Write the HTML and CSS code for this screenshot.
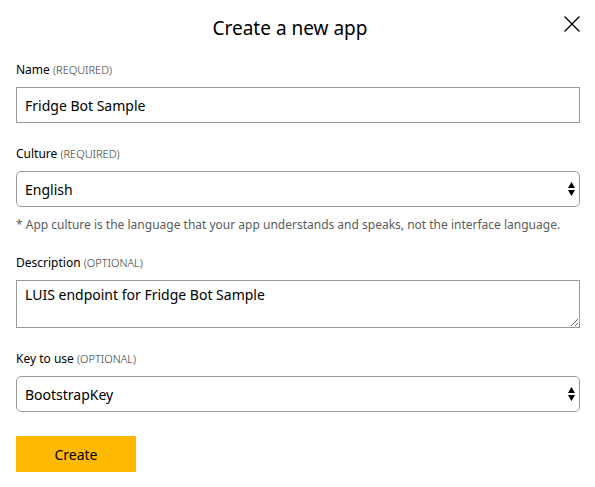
FILE: index.html
```
<!DOCTYPE html>
<html lang="en">
<head>
<meta charset="utf-8">
<meta name="viewport" content="width=device-width, initial-scale=1">
<title>Create a new app</title>
<link rel="stylesheet" href="styles.css">
</head>
<body>
<main class="dialog">
  <header class="dialog-header">
    <h1 class="dialog-title">Create a new app</h1>
    <button class="close" type="button" aria-label="Close">
      <svg width="16" height="16" viewBox="0 0 16 16" aria-hidden="true"><path d="M.5.5l15 15M15.5.5l-15 15"/></svg>
    </button>
  </header>
  <form class="form">
    <div class="field">
      <label class="label" for="name">Name <span class="note">(REQUIRED)</span></label>
      <input class="control" id="name" type="text" value="Fridge Bot Sample">
    </div>
    <div class="field">
      <label class="label" for="culture">Culture <span class="note">(REQUIRED)</span></label>
      <div class="select">
        <select class="control" id="culture"><option>English</option></select>
        <svg class="arrows" width="7" height="14" viewBox="0 0 7 14" aria-hidden="true"><path d="M3.5 0L7 6H0zM0 8h7L3.5 14z"/></svg>
      </div>
      <p class="hint">* App culture is the language that your app understands and speaks, not the interface language.</p>
    </div>
    <div class="field">
      <label class="label" for="description">Description <span class="note">(OPTIONAL)</span></label>
      <textarea class="control area" id="description">LUIS endpoint for Fridge Bot Sample</textarea>
    </div>
    <div class="field">
      <label class="label" for="key">Key to use <span class="note">(OPTIONAL)</span></label>
      <div class="select">
        <select class="control" id="key"><option>BootstrapKey</option></select>
        <svg class="arrows" width="7" height="14" viewBox="0 0 7 14" aria-hidden="true"><path d="M3.5 0L7 6H0zM0 8h7L3.5 14z"/></svg>
      </div>
    </div>
    <button class="create" type="submit">Create</button>
  </form>
</main>
</body>
</html>
```
FILE: styles.css
```
* {
  box-sizing: border-box;
}

body {
  margin: 0;
  background: #fff;
  color: #000;
  font-family: "Noto Sans", "Open Sans", sans-serif;
  font-size: 14px;
}

.dialog {
  padding: 14px 15px 15px 16px;
}

.dialog-header {
  display: grid;
  grid-template-columns: 1fr 16px;
  margin-bottom: 18px;
}

.dialog-title {
  margin: 0;
  font-size: 19px;
  font-weight: 400;
  line-height: 28px;
  text-align: center;
}

.close {
  align-self: start;
  height: 20px;
  padding: 2px 0;
  border: 0;
  background: none;
}

.close svg {
  display: block;
  stroke: #000;
  stroke-width: 1.4;
}

.form,
.field {
  display: flex;
  flex-direction: column;
}

.form {
  gap: 21px;
}

.field {
  gap: 7px;
}

.label {
  font-size: 12px;
  line-height: 20px;
}

.note {
  color: #333;
  font-size: 11px;
  font-weight: 300;
}

.control {
  display: block;
  width: 100%;
  height: 36px;
  margin: 0;
  padding: 0 8px;
  border: 1px solid #999;
  border-radius: 0;
  background: #fff;
  color: #000;
  font: inherit;
}

.select {
  position: relative;
}

.select .control {
  border-radius: 5px;
  appearance: none;
}

.arrows {
  position: absolute;
  top: 11px;
  right: 5px;
  pointer-events: none;
}

.area {
  height: 48px;
  padding: 4px 8px;
  line-height: 20px;
  resize: both;
}

.hint {
  margin: 0 0 -3px;
  color: #5c5c5c;
  font-size: 12px;
  line-height: 21px;
}

.create {
  align-self: flex-start;
  width: 120px;
  height: 36px;
  margin-top: 3px;
  padding: 0;
  border: 0;
  background: #ffb900;
  color: #000;
  font: inherit;
}
```
